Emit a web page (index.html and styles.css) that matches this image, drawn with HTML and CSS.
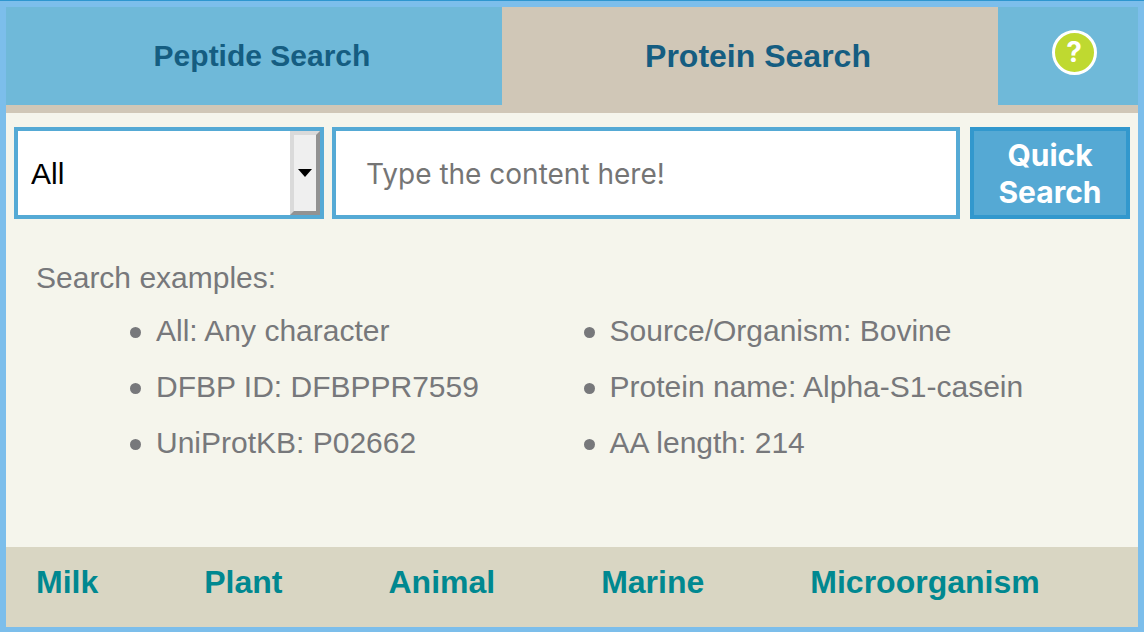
FILE: index.html
```html
<!DOCTYPE html>
<html lang="en">
<head>
<meta charset="utf-8">
<meta name="viewport" content="width=device-width, initial-scale=1">
<title>Protein Search</title>
<link rel="stylesheet" href="styles.css">
</head>
<body>
<main class="panel">
  <nav class="tabs" aria-label="Search type">
    <button type="button" class="tab tab-peptide">Peptide Search</button>
    <button type="button" class="tab tab-active" aria-current="true">Protein Search</button>
    <button type="button" class="tab tab-help" aria-label="Help"><span class="help-icon">?</span></button>
  </nav>
  <form class="search">
    <div class="field">
      <select class="field-select" aria-label="Search field">
        <option>All</option>
        <option>DFBP ID</option>
        <option>UniProtKB</option>
        <option>Source/Organism</option>
        <option>Protein name</option>
        <option>AA length</option>
      </select>
      <span class="field-arrow" aria-hidden="true">
        <svg width="14" height="8" viewBox="0 0 14 8"><path d="M0 0H14L7 8Z"/></svg>
      </span>
    </div>
    <input class="query" type="text" aria-label="Search content" placeholder="Type the content here!">
    <button class="submit" type="submit">Quick Search</button>
  </form>
  <section class="examples">
    <h2 class="examples-title">Search examples:</h2>
    <div class="examples-columns">
      <ul class="examples-list">
        <li>All: Any character</li>
        <li>DFBP ID: DFBPPR7559</li>
        <li>UniProtKB: P02662</li>
      </ul>
      <ul class="examples-list">
        <li>Source/Organism: Bovine</li>
        <li>Protein name: Alpha-S1-casein</li>
        <li>AA length: 214</li>
      </ul>
    </div>
  </section>
  <footer class="sources">
    <a href="#milk">Milk</a>
    <a href="#plant">Plant</a>
    <a href="#animal">Animal</a>
    <a href="#marine">Marine</a>
    <a href="#microorganism">Microorganism</a>
  </footer>
</main>
</body>
</html>
```

FILE: styles.css
```css
* {
  box-sizing: border-box;
}

body {
  margin: 0;
  border-top: 1px solid #2e96cf;
  font-family: "Liberation Sans", Arial, sans-serif;
  font-size: 30px;
  background: #7cbeeb;
}

.panel {
  display: flex;
  flex-direction: column;
  min-height: calc(100vh - 1px);
  border: 6px solid #7cbeeb;
  border-bottom-width: 5px;
  background: #f5f5ec;
}

.tabs {
  display: flex;
  border-bottom: 8px solid #d0c7b7;
}

.tab {
  flex: 1;
  height: 98px;
  padding: 0 0 0 16px;
  border: 0;
  background: #6fb9d9;
  color: #155d81;
  font: bold 30px "Liberation Sans", Arial, sans-serif;
}

.tab-active {
  background: #d0c7b7;
  font-size: 32px;
}

.tab-help {
  display: flex;
  flex: 0 0 140px;
  align-items: center;
  justify-content: center;
  padding: 0 0 8px 12px;
}

.help-icon {
  width: 45px;
  height: 45px;
  border: 3px solid #fff;
  border-radius: 50%;
  background: #bfd930;
  color: #fff;
  font: bold 28px/39px Inter, sans-serif;
  text-align: center;
}

.search {
  display: flex;
  padding: 14px 8px 0;
}

.field {
  position: relative;
  flex: 0 0 310px;
  height: 92px;
  margin-right: 8px;
}

.field-select {
  width: 100%;
  height: 100%;
  padding: 0 40px 0 13px;
  border: 4px solid #55aad5;
  border-radius: 0;
  appearance: none;
  background: #fff;
  color: #000;
  font: 30px "Liberation Sans", Arial, sans-serif;
}

.field-arrow {
  position: absolute;
  top: 4px;
  right: 4px;
  bottom: 4px;
  display: flex;
  align-items: center;
  justify-content: center;
  width: 30px;
  border: 4px solid;
  border-color: #dadada #929292 #929292 #dadada;
  background: #efefef;
  pointer-events: none;
}

.query {
  flex: 1;
  min-width: 0;
  height: 92px;
  margin-right: 10px;
  padding: 2px 30px 0;
  border: 4px solid #55aad5;
  border-radius: 0;
  background: #fff;
  color: #000;
  font: 28px Inter, sans-serif;
}

.query::placeholder {
  color: #757575;
}

.submit {
  flex: 0 0 160px;
  height: 92px;
  padding: 2px 16px 0;
  border: 4px solid #3298cd;
  background: #55a9d4;
  color: #fff;
  font: bold 30px/37px Inter, sans-serif;
}

.examples {
  flex: 1;
  padding-top: 41px;
  color: #77787b;
}

.examples-title {
  margin: 0;
  padding-left: 30px;
  font-size: 30px;
  font-weight: normal;
  line-height: 36px;
}

.examples-columns {
  display: grid;
  grid-template-columns: 45% 1fr;
  padding: 7px 0 32px 124px;
}

.examples-list {
  margin: 0;
  padding: 0;
  list-style: none;
}

.examples-list li {
  display: flex;
  align-items: center;
  gap: 15px;
  line-height: 56px;
}

.examples-list li::before {
  flex: none;
  width: 11px;
  height: 11px;
  margin-top: 2px;
  border-radius: 50%;
  background: #77787b;
  content: "";
}

.sources {
  display: flex;
  flex-wrap: wrap;
  gap: 0 106px;
  padding: 17px 30px 27px;
  background: #d9d6c3;
  font-size: 32px;
  font-weight: bold;
  line-height: 36px;
}

.sources a {
  color: #008890;
  text-decoration: none;
}
```
